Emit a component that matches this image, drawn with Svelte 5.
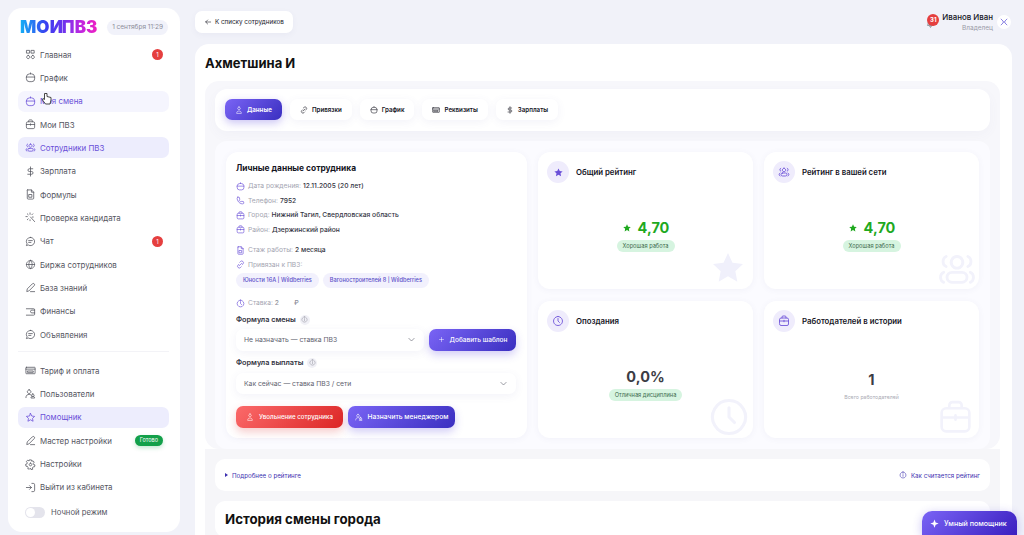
<script>
  const icons = {
    grid: 'M4 3h6v6H4zM14 3h6v6h-6zM7 14a3.500 3.500 0 1 0 .01 0zM17 14a3.500 3.500 0 1 0 .01 0z',
    cal: 'M3 10a7 7 0 0 1 7-6h4a7 7 0 0 1 7 6v5a6 6 0 0 1-6 6H9a6 6 0 0 1-6-6zM3 11h18M12 4V2',
    case: 'M3 9a3 3 0 0 1 3-3h12a3 3 0 0 1 3 3v9a3 3 0 0 1-3 3H6a3 3 0 0 1-3-3zM8 6V4a2 2 0 0 1 2-2h4a2 2 0 0 1 2 2v2M3 12h18M12 10.500v3',
    team: 'M12 4.500a3.500 3.500 0 1 0 .01 0zM9 14h6a3 3 0 0 1 0 6H9a3 3 0 0 1 0-6zM5.500 4.500C3 5.500 3 9.500 5.500 10.500M18.500 4.500c2.500 1 2.500 5 0 6M4 14c-2.500 1-2.500 5 0 6M20 14c2.500 1 2.500 5 0 6',
    dollar: 'M12 2v20M17 6H9.500a3 3 0 0 0 0 6h5a3 3 0 0 1 0 6H6',
    doc: 'M6 2h8l5 5v13a2 2 0 0 1-2 2H7a2 2 0 0 1-2-2V4a1 1 0 0 1 1-2zM14 2v5h5M9 12h6v6H9z',
    spark: 'M5 4l2 2M11 2v3M2 10h3M17 4l-2 2M5 17l2-2M12 11l9 10M16 11h2M11 17v2',
    chat: 'M12 3a9 9 0 1 1-5 16.500L3 21l1.500-4A9 9 0 0 1 12 3zM8 10h8M8 14h5',
    globe: 'M12 3a9 9 0 1 0 .01 0zM3 12h18M12 3c-5 5-5 13 0 18M12 3c5 5 5 13 0 18',
    pen: 'M4 20l1-5L16 4a2.500 2.500 0 0 1 4 4L9 19zM12 21h9',
    wallet: 'M3 6h16a2 2 0 0 1 2 2v10a2 2 0 0 1-2 2H3M21 9h-6a3 3 0 0 0 0 6h6',
    card: 'M3 5h18a1 1 0 0 1 1 1v12a1 1 0 0 1-1 1H3a1 1 0 0 1-1-1V6a1 1 0 0 1 1-1zM2 9h20M6 13h12v3H6z',
    users: 'M9 4a4 4 0 1 0 .01 0zM2 21c0-5 3-7 7-7 1.500 0 3 .3 4 1M17 13a3 3 0 1 0 .01 0zM13 21c0-2 2-3 4-3s4 1 4 3z',
    star: 'M12 3l2.700 5.800 6.300.8-4.600 4.300 1.200 6.300L12 17l-5.600 3.200 1.200-6.300L3 9.600l6.300-.8z',
    gear: 'M12 9a3 3 0 1 0 .01 0zM10 2h4l.8 3 2.800-1 2.400 3-2 2.500.8 2.500 3 1-1 4-3 .2-1.500 2.300.5 3-3.800 .5L12 20l-2 2-3.800-.5.5-3L5.200 16l-3-.2-1-4 3-1 .8-2.500-2-2.500 2.400-3 2.800 1z',
    exit: 'M3 12h11M10 8l4 4-4 4M15 3h3a3 3 0 0 1 3 3v12a3 3 0 0 1-3 3h-3',
    back: 'M20 12H5M11 6l-6 6 6 6',
    link: 'M9 15l6-6M10 6l2-2a4.500 4.500 0 0 1 6.500 6.500l-2 2M14 18l-2 2a4.500 4.500 0 0 1-6.500-6.500l2-2',
    user: 'M12 3a4 4 0 1 0 .01 0zM5 21c0-4 3-6 7-6s7 2 7 6z',
    phone: 'M5 3l4 1 1 5-2 2c1 2 3 4 5 5l2-2 5 1 1 4c-1 2-3 2-5 2C10 21 3 13 3 7c0-2 1-3 2-4z',
    clock: 'M12 3a9 9 0 1 0 .01 0zM12 7v5l3 3',
    info: 'M12 3a9 9 0 1 0 .01 0zM12 11v5M12 8v.01',
    plus: 'M12 5v14M5 12h14',
    chev: 'M5 9l7 7 7-7',
    close: 'M5 5l5 5M19 5l-5 5M5 19l5-5M19 19l-5-5M9 12h6',
    bell: 'M6 10a6 6 0 0 1 12 0c0 5 2 7 2 7H4s2-2 2-7zM10 20a2 2 0 0 0 4 0'
  };

  const menuTop = [
    { icon: 'grid', label: 'Главная', badge: '1' },
    { icon: 'cal', label: 'График' },
    { icon: 'cal', label: 'Моя смена', state: 'hover' },
    { icon: 'case', label: 'Мои ПВЗ' },
    { icon: 'team', label: 'Сотрудники ПВЗ', state: 'active' },
    { icon: 'dollar', label: 'Зарплата' },
    { icon: 'doc', label: 'Формулы' },
    { icon: 'spark', label: 'Проверка кандидата' },
    { icon: 'chat', label: 'Чат', badge: '1' },
    { icon: 'globe', label: 'Биржа сотрудников' },
    { icon: 'pen', label: 'База знаний' },
    { icon: 'wallet', label: 'Финансы' },
    { icon: 'chat', label: 'Объявления' }
  ];
  const menuBottom = [
    { icon: 'card', label: 'Тариф и оплата' },
    { icon: 'users', label: 'Пользователи' },
    { icon: 'star', label: 'Помощник', state: 'active' },
    { icon: 'pen', label: 'Мастер настройки', done: true },
    { icon: 'gear', label: 'Настройки' },
    { icon: 'exit', label: 'Выйти из кабинета' }
  ];
  const tabs = [
    { icon: 'user', label: 'Данные', on: true },
    { icon: 'link', label: 'Привязки' },
    { icon: 'cal', label: 'График' },
    { icon: 'card', label: 'Реквизиты' },
    { icon: 'dollar', label: 'Зарплаты' }
  ];
  const facts = [
    { icon: 'cal', k: 'Дата рождения:', v: '12.11.2005 (20 лет)' },
    { icon: 'phone', k: 'Телефон:', v: '7952' },
    { icon: 'case', k: 'Город:', v: 'Нижний Тагил, Свердловская область' },
    { icon: 'case', k: 'Район:', v: 'Дзержинский район' }
  ];
</script>

{#snippet ico(name, size = 12, cls = '')}
  <svg class={cls} width={size} height={size} viewBox="0 0 24 24" fill="none" stroke="currentColor" stroke-width="1.700" stroke-linecap="round" stroke-linejoin="round"><path d={icons[name]} /></svg>
{/snippet}

{#snippet item(m)}
  <div class="item {m.state || ''}">
    {@render ico(m.icon, 11)}
    <span class="item-label">{m.label}</span>
    {#if m.badge}<span class="badge">{m.badge}</span>{/if}
    {#if m.done}<span class="done">Готово</span>{/if}
  </div>
{/snippet}

<div class="shell">
  <aside class="side">
    <div class="brand">
      <span class="logo">МОИ ПВЗ</span>
      <span class="date">1 сентября 11:29</span>
    </div>
    <nav class="menu">
      {#each menuTop as m}{@render item(m)}{/each}
    </nav>
    <div class="sep"></div>
    <nav class="menu">
      {#each menuBottom as m}{@render item(m)}{/each}
    </nav>
    <div class="night">
      <span class="toggle"><i></i></span>
      <span>Ночной режим</span>
    </div>
    <svg class="cursor" width="11" height="13" viewBox="0 0 11 13"><path d="M3.500 1.500v6L2 6.500 1.500 8l3 4h4.500l1-4V5.500L6 4.500v-3z" fill="#fff" stroke="#333" stroke-width=".9" stroke-linejoin="round" /></svg>
  </aside>

  <main class="main">
    <header class="top">
      <div class="back">{@render ico('back', 8)}<span>К списку сотрудников</span></div>
      <div class="me">
        <span class="bell-wrap">
          {@render ico('bell', 9, 'bell-ico')}
          <span class="bell">31</span>
        </span>
        <div class="me-text"><b>Иванов Иван</b><small>Владелец</small></div>
        <span class="x">{@render ico('close', 10)}</span>
      </div>
    </header>

    <section class="sheet">
      <h1>Ахметшина И</h1>
      <div class="wrap">
        <div class="tabs-panel">
          <div class="tabs">
            {#each tabs as t}
              <div class="tab" class:on={t.on}>{@render ico(t.icon, 8)}<span>{t.label}</span></div>
            {/each}
          </div>
        </div>

        <div class="content">
          <div class="personal">
            <h3>Личные данные сотрудника</h3>
            <div class="facts">
              {#each facts as f}
                <div class="fact">{@render ico(f.icon, 9)}<span class="k">{f.k}</span> <b>{f.v}</b></div>
              {/each}
            </div>
            <div class="facts second">
              <div class="fact">{@render ico('doc', 9)}<span class="k">Стаж работы:</span> <b>2 месяца</b></div>
              <div class="fact">{@render ico('link', 9)}<span class="k">Привязан к ПВЗ:</span></div>
            </div>
            <div class="chips">
              <span>Юности 16А | Wildberries</span>
              <span>Вагоностроителей 8 | Wildberries</span>
            </div>
            <div class="fact rate">{@render ico('clock', 9)}<span class="k">Ставка:</span> <b class="dim">2</b><b class="dim rub">₽</b></div>

            <div class="label">Формула смены <span class="q">{@render ico('info', 7)}</span></div>
            <div class="line">
              <div class="select">Не назначать — ставка ПВЗ {@render ico('chev', 9)}</div>
              <div class="btn add">{@render ico('plus', 7)}<span>Добавить шаблон</span></div>
            </div>
            <div class="label">Формула выплаты <span class="q">{@render ico('info', 7)}</span></div>
            <div class="select wide">Как сейчас — ставка ПВЗ / сети {@render ico('chev', 9)}</div>
            <div class="actions">
              <div class="btn red">{@render ico('user', 8)}<span>Увольнение сотрудника</span></div>
              <div class="btn blue">{@render ico('users', 8)}<span>Назначить менеджером</span></div>
            </div>
          </div>

          <div class="stat">
            <div class="stat-head"><span class="round"><svg width="11" height="11" viewBox="0 0 24 24" fill="#6a4fd8"><path d={icons.star} /></svg></span>Общий рейтинг</div>
            <div class="stat-body">
              <div class="value green"><svg width="10" height="10" viewBox="0 0 24 24" fill="#1fa91f"><path d={icons.star} /></svg>4,70</div>
              <span class="pill">Хорошая работа</span>
            </div>
            <svg class="mark m-star" width="40" height="40" viewBox="0 0 24 24" fill="#f0f0fb"><path d={icons.star} /></svg>
          </div>

          <div class="stat">
            <div class="stat-head"><span class="round">{@render ico('team', 12)}</span>Рейтинг в вашей сети</div>
            <div class="stat-body">
              <div class="value green"><svg width="10" height="10" viewBox="0 0 24 24" fill="#1fa91f"><path d={icons.star} /></svg>4,70</div>
              <span class="pill">Хорошая работа</span>
            </div>
            {@render ico('team', 40, 'mark m-team')}
          </div>

          <div class="stat">
            <div class="stat-head"><span class="round">{@render ico('clock', 12)}</span>Опоздания</div>
            <div class="stat-body">
              <div class="value dark">0,0%</div>
              <span class="pill">Отличная дисциплина</span>
            </div>
            {@render ico('clock', 44, 'mark m-clock')}
          </div>

          <div class="stat">
            <div class="stat-head"><span class="round">{@render ico('case', 12)}</span>Работодателей в истории</div>
            <div class="stat-body low">
              <div class="value dark">1</div>
              <span class="note">Всего работодателей</span>
            </div>
            {@render ico('case', 37, 'mark m-case')}
          </div>
        </div>
      </div>

      <div class="outer-rows">
        <div class="more">
          <span class="more-l"><i class="tri"></i>Подробнее о рейтинге</span>
          <span class="more-r">{@render ico('info', 8)}Как считается рейтинг</span>
        </div>
        <div class="history"><h2>История смены города</h2></div>
      </div>
    </section>
  </main>

  <div class="smart">
    <svg width="9" height="9" viewBox="0 0 24 24" fill="#fff"><path d="M12 1l3 8 8 3-8 3-3 8-3-8-8-3 8-3z" /></svg>
    Умный помощник
  </div>
</div>

<style>
  :global(body) {
    margin: 0;
    background: #f1f2f9;
    font-family: Inter, "Noto Sans", sans-serif;
    overflow: hidden;
  }
  .shell {
    display: flex;
    height: 535px;
    overflow: hidden;
    position: relative;
    box-sizing: border-box;
    padding: 8px 12px 0 8px;
    gap: 15px;
    color: #15151f;
  }
  .side {
    position: relative;
    flex: 0 0 172px;
    height: 524px;
    box-sizing: border-box;
    background: #fff;
    border-radius: 14px;
    padding: 11px 11px 0 10px;
  }
  .brand {
    display: flex;
    align-items: center;
    justify-content: space-between;
    padding: 0 1px 0 2px;
    height: 16px;
    margin-bottom: 9px;
  }
  .logo {
    font-size: 17px;
    font-weight: 900;
    letter-spacing: 0.1px;
    word-spacing: -4.500px;
    white-space: nowrap;
    background: linear-gradient(90deg, #14b0f5 0%, #3b3cf0 35%, #6a35ee 55%, #c026e0 78%, #f01fc0 100%);
    -webkit-background-clip: text;
    background-clip: text;
    color: transparent;
  }
  .date {
    background: #f1f2fa;
    color: #8b8c99;
    font-size: 6.500px;
    height: 15px;
    line-height: 15px;
    padding: 0 5px;
    border-radius: 8px;
    white-space: nowrap;
  }
  .menu {
    display: flex;
    flex-direction: column;
    gap: 2.350px;
  }
  .item {
    display: flex;
    align-items: center;
    gap: 4px;
    height: 21px;
    padding: 0 6px 0 7px;
    border-radius: 7px;
    font-size: 7.900px;
    color: #55565f;
    white-space: nowrap;
  }
  .item-label { flex: 1; }
  .item svg { flex: none; }
  .item.hover { background: #f5f5fe; color: #6a4fd8; }
  .item.active { background: #ededfd; color: #6a4fd8; }
  .badge {
    width: 11px;
    height: 11px;
    border-radius: 50%;
    background: #e53f3f;
    color: #fff;
    font-size: 6px;
    line-height: 11px;
    text-align: center;
  }
  .done {
    background: #13a04a;
    color: #fff;
    font-size: 5.500px;
    padding: 2px 5px;
    line-height: 7px;
    border-radius: 6px;
    box-shadow: 0 2px 4px rgba(19, 160, 74, .25);
  }
  .sep {
    height: 1px;
    background: #f3f3f7;
    margin: 6px 0 8px;
  }
  .night {
    display: flex;
    align-items: center;
    gap: 6px;
    padding: 9px 7px 0;
    font-size: 7.700px;
    color: #55565f;
  }
  .toggle {
    width: 20px;
    height: 11px;
    border-radius: 6px;
    background: #e4e4ec;
    display: block;
    position: relative;
  }
  .toggle i {
    position: absolute;
    left: 1px;
    top: 1px;
    width: 9px;
    height: 9px;
    border-radius: 50%;
    background: #fff;
  }
  .cursor {
    position: absolute;
    left: 33px;
    top: 84px;
  }
  .main {
    flex: 1;
    min-width: 0;
  }
  .top {
    display: flex;
    align-items: center;
    justify-content: space-between;
    height: 22px;
    margin: 3px 1px 11px 0;
  }
  .back {
    display: flex;
    align-items: center;
    gap: 3px;
    height: 22px;
    padding: 0 9px;
    background: #fff;
    border-radius: 7px;
    font-size: 6.300px;
    box-shadow: 0 2px 6px rgba(80, 80, 140, .05);
  }
  .me {
    display: flex;
    align-items: center;
    gap: 3px;
  }
  .bell-wrap {
    position: relative;
    width: 12px;
    height: 12px;
    margin-top: -5px;
  }
  .bell-wrap :global(.bell-ico) {
    position: absolute;
    left: -1px;
    top: 5px;
    color: #55565f;
  }
  .bell {
    position: absolute;
    inset: 0;
    border-radius: 50%;
    background: #e53f3f;
    color: #fff;
    font-size: 6px;
    font-weight: 700;
    line-height: 12px;
    text-align: center;
  }
  .me-text {
    display: flex;
    flex-direction: column;
    align-items: flex-end;
    line-height: 11px;
    padding-top: 2px;
  }
  .me-text b { font-weight: 500; font-size: 7.900px; }
  .me-text small { font-size: 6.500px; color: #9a9ba8; }
  .x {
    width: 14px;
    height: 14px;
    margin-left: 1px;
    border-radius: 50%;
    background: #fff;
    color: #5a4fd8;
    display: flex;
    align-items: center;
    justify-content: center;
  }
  .sheet {
    background: #fff;
    border-radius: 14px 14px 0 0;
    padding: 10px 10px 0;
    height: 600px;
  }
  h1 {
    margin: 0 0 9px;
    font-size: 13px;
    line-height: 18px;
    font-weight: 700;
    color: #111;
  }
  .wrap {
    background: #f7f7fb;
    border-radius: 14px;
    padding: 8px 10px 0;
    height: 368px;
    box-sizing: border-box;
    margin-right: 2px;
  }
  .tabs-panel {
    background: #fff;
    border-radius: 12px;
    padding: 10px;
    height: 42px;
    box-sizing: border-box;
    box-shadow: 0 4px 12px rgba(90, 90, 160, .04);
  }
  .tabs {
    display: flex;
    gap: 8px;
  }
  .tab {
    display: flex;
    align-items: center;
    gap: 4px;
    height: 21px;
    padding: 0 10px;
    background: #fff;
    border-radius: 7px;
    font-size: 6.200px;
    font-weight: 600;
    box-shadow: 0 2px 8px rgba(90, 90, 160, .08);
  }
  .tab.on {
    color: #fff;
    background: linear-gradient(135deg, #7a64f5, #3a2fc0);
    box-shadow: 0 3px 8px rgba(80, 60, 220, .3);
  }
  .content {
    display: grid;
    grid-template-columns: 301px 215px 215px;
    grid-template-rows: 137px 137px;
    gap: 12px 11px;
    margin-top: 10px;
    padding: 11px;
    height: 308px;
    box-sizing: border-box;
    background: #fbfbff;
    border-radius: 12px;
  }
  .personal {
    grid-row: span 2;
    background: #fff;
    border-radius: 12px;
    padding: 10px 11px 0 10px;
    box-shadow: 0 1px 6px rgba(90, 90, 160, .06);
  }
  h3 {
    margin: 0 0 5px;
    font-size: 8.400px;
    line-height: 12px;
    font-weight: 700;
  }
  .facts {
    display: flex;
    flex-direction: column;
  }
  .fact {
    display: flex;
    align-items: center;
    height: 14.500px;
    font-size: 6.700px;
    white-space: pre;
    color: #6a4fd8;
  }
  .fact svg { margin-right: 3px; flex: none; }
  .fact .k { color: #a4a5b1; }
  .fact b { color: #33343f; font-weight: 500; margin-left: 2px; }
  .fact b.dim { color: #8e8f9b; }
  .fact b.rub { margin-left: 15px; }
  .second { margin-top: 6px; }
  .chips {
    display: flex;
    gap: 4px;
    margin-top: 1px;
  }
  .chips span {
    background: #f2f1fd;
    color: #5a4fc8;
    font-size: 5.600px;
    font-weight: 500;
    line-height: 15px;
    padding: 0 7px;
    border-radius: 8px;
  }
  .rate { margin-top: 8px; }
  .label {
    display: flex;
    align-items: center;
    gap: 4px;
    height: 12px;
    margin: 3px 0;
    font-size: 7.300px;
    font-weight: 600;
    color: #33343f;
  }
  .q {
    width: 10px;
    height: 10px;
    border-radius: 50%;
    background: #f0f0f6;
    color: #8e8f9b;
    display: flex;
    align-items: center;
    justify-content: center;
  }
  .line {
    display: flex;
    gap: 5px;
    margin-bottom: 6px;
  }
  .select {
    flex: 1;
    height: 22px;
    display: flex;
    align-items: center;
    justify-content: space-between;
    padding: 0 8px;
    background: #fff;
    border-radius: 7px;
    font-size: 6.800px;
    color: #62636f;
    box-shadow: 0 2px 8px rgba(90, 90, 160, .08);
  }
  .select.wide { height: 21px; margin-top: 4px; }
  .btn {
    height: 22px;
    display: flex;
    align-items: center;
    justify-content: center;
    gap: 5px;
    border-radius: 7px;
    color: #fff;
    font-size: 6.500px;
    font-weight: 500;
    box-sizing: border-box;
  }
  .add, .blue {
    background: linear-gradient(135deg, #7a64f5, #3a2fc0);
    box-shadow: 0 4px 9px rgba(80, 60, 220, .25);
  }
  .add { width: 87px; }
  .blue { width: 107px; font-size: 6.700px; }
  .red {
    width: 107px;
    font-size: 6.200px;
    background: linear-gradient(135deg, #fb6a6a, #dc2626);
    box-shadow: 0 4px 9px rgba(220, 50, 50, .25);
  }
  .actions {
    display: flex;
    gap: 5px;
    margin-top: 12px;
  }
  .stat {
    position: relative;
    overflow: hidden;
    background: #fff;
    border-radius: 12px;
    padding: 9px;
    display: flex;
    flex-direction: column;
    box-shadow: 0 1px 6px rgba(90, 90, 160, .06);
  }
  .stat-head {
    display: flex;
    align-items: center;
    gap: 7px;
    font-size: 7.800px;
    font-weight: 600;
  }
  .round {
    width: 22px;
    height: 22px;
    border-radius: 50%;
    background: #efecfc;
    color: #6a4fd8;
    display: flex;
    align-items: center;
    justify-content: center;
  }
  .stat-body {
    flex: 1;
    display: flex;
    flex-direction: column;
    align-items: center;
    padding-top: 36px;
    gap: 3px;
    position: relative;
    z-index: 1;
  }
  .stat-body.low { padding-top: 39px; gap: 5px; }
  .value {
    display: flex;
    align-items: center;
    gap: 6px;
    font-size: 14.500px;
    line-height: 18px;
    font-weight: 700;
  }
  .green { color: #1fa91f; }
  .dark { color: #3c3c44; }
  .pill {
    background: #d6f4e0;
    color: #3f6d4f;
    font-size: 5.700px;
    line-height: 12px;
    padding: 0 6px;
    border-radius: 6px;
  }
  .note { font-size: 5.200px; color: #a9aab4; }
  .stat :global(.mark) {
    position: absolute;
    color: #f2f2fb;
  }
  .stat :global(.m-star) { right: 5px; bottom: 1px; }
  .stat :global(.m-team) { right: 2px; bottom: 0; }
  .stat :global(.m-clock) { right: 2px; bottom: -1px; }
  .stat :global(.m-case) { right: 5px; bottom: 2px; }
  .outer-rows {
    background: #f6f6f9;
    margin: 0 2px 0 0;
    padding: 10px 10px 0;
    height: 100px;
  }
  .more {
    height: 32px;
    background: #fff;
    border-radius: 10px;
    display: flex;
    align-items: center;
    justify-content: space-between;
    padding: 0 10px;
    font-size: 6.200px;
    color: #3d2fb0;
  }
  .more-l, .more-r {
    display: flex;
    align-items: center;
    gap: 4px;
  }
  .tri {
    width: 0;
    height: 0;
    border-left: 3px solid #3d2fb0;
    border-top: 2px solid transparent;
    border-bottom: 2px solid transparent;
  }
  .history {
    margin-top: 10px;
    background: #fff;
    border-radius: 10px;
    padding: 9px 10px;
  }
  h2 {
    margin: 0;
    font-size: 13.300px;
    line-height: 18px;
    font-weight: 700;
    color: #111;
  }
  .smart {
    position: absolute;
    right: 7px;
    bottom: 0;
    width: 95px;
    height: 24px;
    box-sizing: border-box;
    display: flex;
    align-items: center;
    gap: 5px;
    padding-left: 8px;
    color: #fff;
    font-size: 7.100px;
    font-weight: 500;
    border-radius: 10px 10px 0 0;
    background: linear-gradient(135deg, #7a64f5, #3a1fc0);
    box-shadow: 0 2px 10px rgba(80, 60, 220, .3);
  }
</style>
